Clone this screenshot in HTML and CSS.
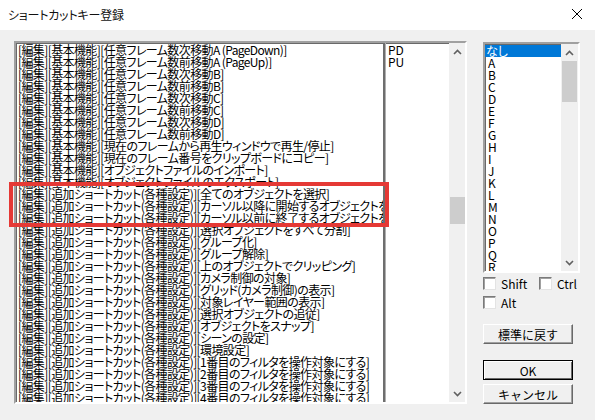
FILE: index.html
```html
<!DOCTYPE html>
<html lang="ja">
<head>
<meta charset="utf-8">
<title>ショートカットキー登録</title>
<link rel="stylesheet" href="styles.css">
</head>
<body>
<div class="window">
  <div class="titlebar">
    <span class="title">ショートカットキー登録</span>
    <svg class="close" width="12" height="12" viewBox="0 0 12 12"><path d="M1 1L11 11M11 1L1 11" stroke="#000" stroke-width="1" fill="none"/></svg>
  </div>
  <div class="content">
    <div class="mainlist sunken">
      <div class="col1">
        <div class="row">[編集][基本機能][任意フレーム数次移動A (PageDown)]</div>
        <div class="row">[編集][基本機能][任意フレーム数前移動A (PageUp)]</div>
        <div class="row">[編集][基本機能][任意フレーム数次移動B]</div>
        <div class="row">[編集][基本機能][任意フレーム数前移動B]</div>
        <div class="row">[編集][基本機能][任意フレーム数次移動C]</div>
        <div class="row">[編集][基本機能][任意フレーム数前移動C]</div>
        <div class="row">[編集][基本機能][任意フレーム数次移動D]</div>
        <div class="row">[編集][基本機能][任意フレーム数前移動D]</div>
        <div class="row">[編集][基本機能][現在のフレームから再生ウィンドウで再生/停止]</div>
        <div class="row">[編集][基本機能][現在のフレーム番号をクリップボードにコピー]</div>
        <div class="row">[編集][基本機能][オブジェクトファイルのインポート]</div>
        <div class="row">[編集][基本機能][オブジェクトファイルのエクスポート]</div>
        <div class="row">[編集][追加ショートカット(各種設定)][全てのオブジェクトを選択]</div>
        <div class="row">[編集][追加ショートカット(各種設定)][カーソル以降に開始するオブジェクトを選択]</div>
        <div class="row">[編集][追加ショートカット(各種設定)][カーソル以前に終了するオブジェクトを選択]</div>
        <div class="row">[編集][追加ショートカット(各種設定)][選択オブジェクトをすべて分割]</div>
        <div class="row">[編集][追加ショートカット(各種設定)][グループ化]</div>
        <div class="row">[編集][追加ショートカット(各種設定)][グループ解除]</div>
        <div class="row">[編集][追加ショートカット(各種設定)][上のオブジェクトでクリッピング]</div>
        <div class="row">[編集][追加ショートカット(各種設定)][カメラ制御の対象]</div>
        <div class="row">[編集][追加ショートカット(各種設定)][グリッド(カメラ制御)の表示]</div>
        <div class="row">[編集][追加ショートカット(各種設定)][対象レイヤー範囲の表示]</div>
        <div class="row">[編集][追加ショートカット(各種設定)][選択オブジェクトの追従]</div>
        <div class="row">[編集][追加ショートカット(各種設定)][オブジェクトをスナップ]</div>
        <div class="row">[編集][追加ショートカット(各種設定)][シーンの設定]</div>
        <div class="row">[編集][追加ショートカット(各種設定)][環境設定]</div>
        <div class="row">[編集][追加ショートカット(各種設定)][1番目のフィルタを操作対象にする]</div>
        <div class="row">[編集][追加ショートカット(各種設定)][2番目のフィルタを操作対象にする]</div>
        <div class="row">[編集][追加ショートカット(各種設定)][3番目のフィルタを操作対象にする]</div>
        <div class="row">[編集][追加ショートカット(各種設定)][4番目のフィルタを操作対象にする]</div>
      </div>
      <div class="divider"></div>
      <div class="col2">
        <div class="row">PD</div>
        <div class="row">PU</div>
      </div>
      <div class="vscroll">
        <div class="arrow up"><svg width="9" height="6" viewBox="0 0 9 6"><path d="M1 5L4.5 1.5L8 5" stroke="#606060" stroke-width="1.6" fill="none"/></svg></div>
        <div class="track main-track"><div class="thumb main-thumb"></div></div>
        <div class="arrow down"><svg width="9" height="6" viewBox="0 0 9 6"><path d="M1 1L4.5 4.5L8 1" stroke="#606060" stroke-width="1.6" fill="none"/></svg></div>
      </div>
    </div>
    <div class="side">
      <div class="keylist sunken">
        <div class="keys">
          <div class="row selected">なし</div>
          <div class="row">A</div>
          <div class="row">B</div>
          <div class="row">C</div>
          <div class="row">D</div>
          <div class="row">E</div>
          <div class="row">F</div>
          <div class="row">G</div>
          <div class="row">H</div>
          <div class="row">I</div>
          <div class="row">J</div>
          <div class="row">K</div>
          <div class="row">L</div>
          <div class="row">M</div>
          <div class="row">N</div>
          <div class="row">O</div>
          <div class="row">P</div>
          <div class="row">Q</div>
          <div class="row">R</div>
        </div>
        <div class="vscroll">
          <div class="arrow up"><svg width="9" height="6" viewBox="0 0 9 6"><path d="M1 5L4.5 1.5L8 5" stroke="#606060" stroke-width="1.6" fill="none"/></svg></div>
          <div class="track"><div class="thumb key-thumb"></div></div>
          <div class="arrow down"><svg width="9" height="6" viewBox="0 0 9 6"><path d="M1 1L4.5 4.5L8 1" stroke="#606060" stroke-width="1.6" fill="none"/></svg></div>
        </div>
      </div>
      <div class="checks">
        <label class="check"><span class="box"></span><span>Shift</span></label>
        <label class="check"><span class="box"></span><span>Ctrl</span></label>
      </div>
      <div class="checks">
        <label class="check"><span class="box"></span><span>Alt</span></label>
      </div>
      <div class="btn reset">標準に戻す</div>
      <div class="btn default">OK</div>
      <div class="btn">キャンセル</div>
    </div>
  </div>
  <div class="highlight"></div>
</div>
</body>
</html>
```

FILE: styles.css
```css
* { box-sizing: border-box; }
html, body {
  margin: 0;
  padding: 0;
  width: 595px;
  height: 420px;
  overflow: hidden;
  background: #f0f0f0;
}
body {
  font-family: "Noto Sans CJK JP", "Noto Sans", sans-serif;
  font-size: 12px;
  font-weight: 400;
  color: #000;
}
.window {
  position: relative;
  width: 595px;
  height: 420px;
}
.titlebar {
  height: 30px;
  background: #fff;
  display: flex;
  align-items: center;
  justify-content: space-between;
  padding: 0 12px 0 8px;
}
.title {
  font-size: 12px;
  color: #111;
  letter-spacing: -0.2px;
  font-feature-settings: "palt";
  margin-top: -1px;
}
.close { margin-top: -2px; }
.content {
  display: flex;
  align-items: flex-start;
  padding: 11px 0 0 14px;
}
.sunken {
  background: #fff;
  border-style: solid;
  border-width: 2px;
  border-color: #a0a0a0 #fff #fff #a0a0a0;
  box-shadow: inset 1px 1px 0 #696969;
}
.mainlist {
  width: 453px;
  height: 363px;
  display: flex;
  overflow: hidden;
}
.row {
  height: 12px;
  line-height: 12px;
  white-space: nowrap;
  font-feature-settings: "palt";
}
.col1 {
  width: 367px;
  flex: none;
  overflow: hidden;
  padding: 1px 0 0 2px;
  letter-spacing: -0.6px;
}
.divider {
  width: 3px;
  flex: none;
  background: #6e6e6e;
  border-right: 1px solid #b0b0b0;
}
.col2 {
  width: 63px;
  flex: none;
  padding: 1px 0 0 2px;
}
.vscroll {
  width: 17px;
  flex: none;
  background: #f0f0f0;
  display: flex;
  flex-direction: column;
}
.arrow {
  height: 17px;
  display: flex;
  align-items: center;
  justify-content: center;
}
.track {
  flex: 1;
}
.thumb {
  background: #cdcdcd;
  margin: 0 1px;
}
.main-thumb {
  margin-top: 137px;
  height: 27px;
}
.key-thumb {
  height: 41px;
}
.side {
  margin-left: 16px;
  margin-top: 1px;
  width: 97px;
}
.keylist {
  width: 97px;
  height: 231px;
  display: flex;
  overflow: hidden;
}
.keys {
  flex: 1;
  padding-top: 1px;
}
.keys .row {
  padding-left: 3px;
}
.keys .row.selected {
  background: #0078d7;
  color: #fff;
  padding-left: 1px;
}
.checks {
  display: flex;
  margin-top: 4px;
}
.checks + .checks { margin-top: 6px; }
.check {
  display: flex;
  align-items: center;
  width: 56px;
  flex: none;
  height: 13px;
  gap: 5px;
}
.box {
  width: 13px;
  height: 13px;
  flex: none;
  background: #fff;
  border-style: solid;
  border-width: 1px;
  border-color: #7a7a7a #e3e3e3 #e3e3e3 #7a7a7a;
  box-shadow: inset 1px 1px 0 #a0a0a0;
}
.btn {
  width: 90px;
  height: 20px;
  display: flex;
  align-items: center;
  justify-content: center;
  background: #f0f0f0;
  border-style: solid;
  border-width: 1px;
  border-color: #fff #696969 #696969 #fff;
  box-shadow: inset -1px -1px 0 #a0a0a0;
  margin-top: 4px;
}
.btn.reset { margin-top: 15px; }
.btn.default {
  margin-top: 16px;
  border: 1px solid #000;
  box-shadow: inset 1px 1px 0 #fff, inset -1px -1px 0 #696969;
}
.highlight {
  position: absolute;
  left: 9px;
  top: 182px;
  width: 380px;
  height: 45px;
  border: 4px solid #e53935;
}
```
